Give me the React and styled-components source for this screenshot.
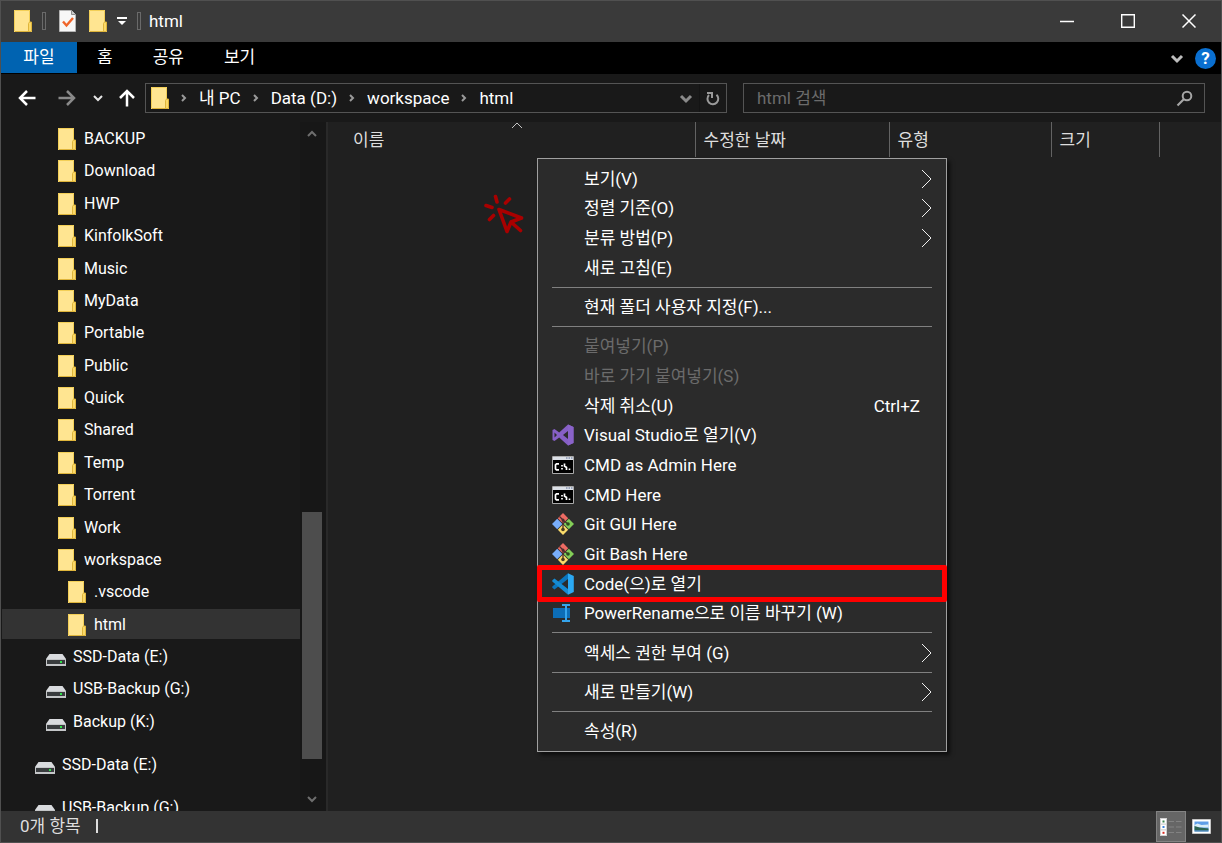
import React from "react";
import styled, { createGlobalStyle, css } from "styled-components";

const GlobalStyle = createGlobalStyle`
  *, *::before, *::after { box-sizing: border-box; }
  body {
    margin: 0;
    background: #202020;
    color: #fff;
    font-family: Roboto, "Noto Sans CJK KR", sans-serif;
    font-size: 17px;
    line-height: 24px;
  }
  button, input, a { font: inherit; color: inherit; }
  button { border: 0; padding: 0; background: none; }
  svg { display: block; flex: none; }
`;

const Window = styled.div`
  display: flex;
  flex-direction: column;
  height: 100vh;
  border: 1px solid #505050;
  overflow: hidden;
`;

const TitleBar = styled.header`
  display: flex;
  align-items: center;
  height: 41px;
  flex: none;
  padding: 0 2px 2px 13px;
  background: #3a3a3a;
`;

const QuickBar = styled.div`
  display: flex;
  align-items: center;
  gap: 10px;
`;

const QuickButton = styled.button`
  display: flex;
  padding: 0 ${(p) => (p.$wide ? "3px" : "0")};
`;

const Grip = styled.span`
  width: 4px;
  height: 18px;
  border: 1px solid #6a6a6a;
`;

const Title = styled.h1`
  margin: 0 auto 0 8px;
  font-size: 17px;
  font-weight: 400;
`;

const CaptionButton = styled.button`
  display: flex;
  align-items: center;
  justify-content: center;
  width: 61px;
  height: 39px;
`;

const RibbonTabs = styled.nav`
  display: flex;
  align-items: center;
  height: 32px;
  flex: none;
  padding-right: 5px;
  background: #000;
`;

const Tab = styled.button`
  height: 31px;
  align-self: flex-start;
  padding: 0 20px 2px;
  ${(p) =>
    p.$file &&
    css`
      width: 76px;
      background: #0063b1;
    `}
`;

const RibbonTools = styled.div`
  display: flex;
  align-items: center;
  gap: 10px;
  margin-left: auto;
`;

const HelpButton = styled.button`
  width: 21px;
  height: 21px;
  border-radius: 50%;
  background: #0a6fd0;
  font-size: 17px;
  font-weight: 700;
  line-height: 21px;
`;

const AddressRow = styled.div`
  display: flex;
  align-items: center;
  height: 48px;
  flex: none;
  padding: 0 16px 0 2px;
  background: #191919;
`;

const NavButtons = styled.div`
  display: flex;
  align-items: center;
  margin-right: 4px;
`;

const NavButton = styled.button`
  display: flex;
  justify-content: center;
  width: ${(p) => p.$width};
`;

const AddressBar = styled.div`
  display: flex;
  align-items: center;
  flex: 1;
  height: 30px;
  padding-left: 5px;
  border: 1px solid #545454;
`;

const Crumbs = styled.ol`
  display: flex;
  align-items: center;
  margin: 0 auto 0 0;
  padding: 0;
  list-style: none;
`;

const Crumb = styled.li`
  display: flex;
  align-items: center;
  gap: 12px;
  margin-left: 11px;

  a { text-decoration: none; white-space: nowrap; }
`;

const AddressButton = styled.button`
  display: flex;
  align-items: center;
  height: 28px;
  padding: 0 5px;
  border-left: ${(p) => (p.$divided ? "1px solid #141414" : "0")};
`;

const SearchBox = styled.label`
  display: flex;
  align-items: center;
  width: 462px;
  height: 30px;
  margin-left: 16px;
  padding: 0 11px 0 13px;
  border: 1px solid #545454;
`;

const SearchInput = styled.input`
  flex: 1;
  min-width: 0;
  padding: 0;
  border: 0;
  outline: 0;
  background: none;
  &::placeholder { color: #6b6b6b; opacity: 1; }
`;

const Body = styled.div`
  display: flex;
  flex: 1;
  min-height: 0;
`;

const Sidebar = styled.aside`
  display: flex;
  width: 327px;
  flex: none;
  overflow: hidden;
  background: #191919;
  border-right: 2px solid #292929;
  font-size: 16px;
`;

const Tree = styled.div`
  flex: 1;
  padding: 1px 0 0 1px;
  overflow: hidden;
`;

const TreeGroup = styled.ul`
  display: flex;
  flex-direction: column;
  justify-content: space-between;
  height: ${(p) => p.$height};
  margin: 0 0 13px;
  padding: 0;
  list-style: none;
`;

const TreeItem = styled.button`
  display: flex;
  align-items: center;
  gap: ${(p) => (p.$drive ? "7px" : "8px")};
  width: 100%;
  height: 30px;
  padding-top: 2px;
  padding-left: ${(p) => p.$indent};
  background: ${(p) => (p.$selected ? "#333" : "none")};
  white-space: nowrap;

  svg { margin-top: ${(p) => (p.$drive ? "6px" : "0")}; }
`;

const ScrollTrack = styled.div`
  display: flex;
  flex-direction: column;
  align-items: center;
  width: 26px;
  padding: 8px 3px 8px 1px;
  background: #171717;
`;

const ScrollThumb = styled.div`
  width: 20px;
  height: 247px;
  margin: auto 0 36px;
  background: #4d4d4d;
`;

const FilePane = styled.main`
  position: relative;
  flex: 1;
  min-width: 0;
  background: #202020;
`;

const FileTable = styled.table`
  width: 100%;
  table-layout: fixed;
  border-collapse: collapse;
`;

const HeadCell = styled.th`
  position: relative;
  width: ${(p) => p.$width};
  height: 35px;
  padding: 0 0 0 ${(p) => (p.$first ? "25px" : "8px")};
  border-right: ${(p) => (p.$width ? "1px solid #636363" : "0")};
  color: #dedede;
  font-weight: 400;
  text-align: left;
`;

const SortMark = styled.span`
  position: absolute;
  top: 0;
  left: 50%;
`;

const ClickMark = styled.div`
  position: absolute;
  top: 72px;
  left: 156px;
`;

const ContextMenu = styled.ul`
  position: absolute;
  top: 36px;
  left: 209px;
  display: flex;
  flex-direction: column;
  justify-content: space-between;
  width: 410px;
  height: 594px;
  margin: 0;
  padding: 5px 0;
  border: 1px solid #a0a0a0;
  background: #2b2b2b;
  box-shadow: 3px 3px 4px rgba(0, 0, 0, 0.6);
  list-style: none;
`;

const MenuButton = styled.button`
  display: grid;
  grid-template-columns: 22px 1fr auto;
  column-gap: 10px;
  align-items: center;
  width: 100%;
  height: 29px;
  padding: 0 14px;
  text-align: left;
  color: ${(p) => (p.disabled ? "#6b6b6b" : "#fff")};
`;

const MenuLabel = styled.span`
  white-space: nowrap;
`;

const Shortcut = styled.span`
  padding-right: 12px;
`;

const MenuLine = styled.li`
  height: 1px;
  margin: 4px 14px;
  background: #808080;
`;

const MenuItem = styled.li`
  position: relative;
`;

const RedFrame = styled.span`
  position: absolute;
  inset: -4px -1px;
  border: 5px solid #fe0000;
  border-radius: 2px;
  pointer-events: none;
`;

const StatusBar = styled.footer`
  display: flex;
  align-items: center;
  height: 31px;
  flex: none;
  padding: 0 5px 0 19px;
  background: #333;
  color: #dedede;
`;

const StatusText = styled.span`
  margin-bottom: 2px;
  padding-right: 15px;
  border-right: 2px solid #dedede;
  line-height: 14px;
`;

const ViewButton = styled.button`
  display: flex;
  align-items: center;
  justify-content: center;
  width: 30px;
  height: 31px;
  border: 1px solid ${(p) => (p.$active ? "#838383" : "transparent")};
  background: ${(p) => (p.$active ? "#666" : "none")};

  &:first-of-type { margin-left: auto; }
`;

const FolderIcon = () => (
  <svg width="18" height="22" viewBox="0 0 18 22">
    <path d="M0 0h16v12l2 1v9H0z" fill="#ffe591" />
    <path d="M.5 21.5V.5h15v12" fill="none" stroke="#f3cf57" />
    <path d="M14.5 21v-7.5l1-1.500h2v9.500H1" fill="#fbd968" stroke="#dfb53b" />
  </svg>
);

const DriveIcon = () => (
  <svg width="20" height="12" viewBox="0 0 20 12">
    <path d="M3.500 0h13L20 5H0z" fill="#d9dbde" />
    <path d="M0 5h20v7H0z" fill="#c4c6c8" />
    <path d="M1 6h18v4H1z" fill="#393c3e" />
    <path d="M14 7h2v2h-2z" fill="#2fe04a" />
  </svg>
);

const PropertiesIcon = () => (
  <svg width="17" height="22" viewBox="0 0 17 22">
    <path d="M.5.5h12l4 4v17H.5z" fill="#f7f7f7" stroke="#b5b5b5" />
    <path d="M12.500.5v4h4" fill="#ccc" stroke="#8d8d8d" />
    <path d="M4 11.500l3.500 4L14 8" fill="none" stroke="#f0652a" strokeWidth="2.400" />
  </svg>
);

/* size is the depth of the point; the opening is twice as wide */
const Chevron = ({ dir = "right", size = 3, color = "#9a9a9a", weight = 2 }) => {
  const near = weight;
  const mid = near + size;
  const far = near + size * 2;
  const long = far + near;
  const short = mid + near;
  const upright = dir === "right";
  const points = {
    right: `${near},${near} ${mid},${mid} ${near},${far}`,
    down: `${near},${near} ${mid},${mid} ${far},${near}`,
    up: `${near},${mid} ${mid},${near} ${far},${mid}`,
  }[dir];
  return (
    <svg width={upright ? short : long} height={upright ? long : short}>
      <polyline points={points} fill="none" stroke={color} strokeWidth={weight} />
    </svg>
  );
};

const Arrow = ({ turn = 0, color = "#fff" }) => (
  <svg width="18" height="18" viewBox="0 0 18 18">
    <path
      d="M17.500 9H2M9 2L2 9l7 7"
      transform={`rotate(${turn} 9 9)`}
      fill="none"
      stroke={color}
      strokeWidth="2.500"
    />
  </svg>
);

const VisualStudioIcon = () => (
  <svg width="22" height="22" viewBox="0 0 22 22">
    <path
      fillRule="evenodd"
      d="M16 .5L21.500 3v16L16 21.500 7.200 13.500l-4.700 3.500L.5 16V6l2-1 4.700 3.500zM16 7l-5 4 5 4zM2.500 8.500v5L5 11z"
      fill="#865fc5"
    />
    <path d="M16 .5L21.500 3v16L16 21.500z" fill="#8a63c9" />
  </svg>
);

const ConsoleIcon = () => (
  <svg width="22" height="18" viewBox="0 0 22 18">
    <path d="M.5.5h21v17H.5z" fill="#000" stroke="#aaa" />
    <path d="M1 1h20v3H1z" fill="#dce1e8" />
    <path d="M14 1.500h1.500v1H14zM16.500 1.500H18v1h-1.500zM19 1.500h1.500v1H19z" fill="#5a6d91" />
    <path
      d="M7 7.800H4.500l-1 1v4l1 1H7M10 9v1.500M10 12v1.500M12.500 7.500v2.500l2 1.500v2.500M17.500 12.500v1.500"
      fill="none"
      stroke="#fff"
      strokeWidth="1.700"
    />
  </svg>
);

const GitIcon = () => (
  <svg width="22" height="22" viewBox="0 0 22 22">
    <path d="M11 0l5.200 5.200L11 10.400 5.800 5.200z" fill="#ed6b63" />
    <path d="M5.200 5.800L10.400 11l-5.200 5.200L0 11z" fill="#79aefa" />
    <path d="M16.800 5.800L22 11l-5.200 5.200L11.600 11z" fill="#83ce57" />
    <path d="M11 11.600l5.200 5.200L11 22l-5.200-5.200z" fill="#fbdc6b" />
    <path d="M7.500 3.500L11 7v9M11 7l5 4" fill="none" stroke="#4a2c2c" strokeWidth="1.300" />
    <circle cx="11" cy="7" r="1.500" fill="#4a2c2c" />
    <circle cx="11" cy="16.500" r="1.800" fill="#4a3c20" />
    <circle cx="16" cy="11" r="1.800" fill="#2c4a20" />
  </svg>
);

const CodeIcon = () => (
  <svg width="22" height="22" viewBox="0 0 22 22">
    <path d="M16 6L2.500 16.500.3 14.800V13.500L16 .3z" fill="#0b75bd" />
    <path d="M16 16L2.500 5.500.3 7.200v1.300L16 21.700z" fill="#158bd3" />
    <path d="M16 .2L21.800 3v16L16 21.800z" fill="#2ba9f3" />
  </svg>
);

const RenameIcon = () => (
  <svg width="20" height="18" viewBox="0 0 20 18">
    <path d="M1 4h17v10H1z" fill="#0c6db6" />
    <path d="M10 0h8v2h-3v14h3v2h-8v-2h3V2h-3z" fill="#35a4ec" />
  </svg>
);

const RefreshIcon = () => (
  <svg width="16" height="17" viewBox="0 0 16 17">
    <path d="M4 5a5.400 5.400 0 1 0 7.500-.2" fill="none" stroke="#9a9a9a" strokeWidth="2" />
    <path d="M2 3h5v5" fill="none" stroke="#9a9a9a" strokeWidth="2" />
  </svg>
);

const SearchIcon = () => (
  <svg width="17" height="17" viewBox="0 0 17 17">
    <circle cx="11" cy="6" r="4.300" fill="none" stroke="#a6a6a6" strokeWidth="2" />
    <path d="M8 9l-6.500 6.500" stroke="#a6a6a6" strokeWidth="2.200" />
  </svg>
);

const ClickIcon = () => (
  <svg width="40" height="40" viewBox="0 0 40 40">
    <g fill="none" stroke="#a90000" strokeWidth="3.600" strokeLinecap="round" strokeLinejoin="round">
      <path d="M15 15.500l22.500 8.500-10.500 4-4 9.500zM27 28l9.500 8.500" />
      <path d="M11.500 2.500L13 8M2 11.500l6 2M25.500 5l-4 4M5.500 25.500l4-4" />
    </g>
  </svg>
);

const ListViewIcon = () => (
  <svg width="22" height="18" viewBox="0 0 22 18">
    <path d="M0 0h7v18H0z" fill="#d0d0d0" />
    <path d="M1 1h5v4.500H1zM1 6.800h5v4.500H1zM1 12.500h5V17H1z" fill="#fff" />
    <path d="M2.500 2.500h2v2h-2z" fill="#39844f" />
    <path d="M2.500 8h2v2h-2z" fill="#3b82dc" />
    <path d="M2.500 13.800h2v2h-2z" fill="#d82a20" />
    <path d="M8.500 3.500H14M16 3.500h5.500M8.500 9H14M16 9h5.500M8.500 14.500H14M16 14.500h5.500" stroke="#828282" />
  </svg>
);

const PictureViewIcon = () => (
  <svg width="19" height="15" viewBox="0 0 19 15">
    <path d="M.5.5h18v14H.5z" fill="#fff" stroke="#c4c4c4" />
    <path d="M2.500 2.500h14v10h-14z" fill="#5f9ee8" />
    <path d="M2.500 6l3-1.500 4 1.500 7-.5v3h-14z" fill="#d9ecf7" />
    <path d="M2.500 7l5 1.500 9 1v1.500h-14z" fill="#2c6452" />
    <path d="M2.500 11h14v1.500h-14z" fill="#4a83a8" />
  </svg>
);

const folders = [
  "BACKUP", "Download", "HWP", "KinfolkSoft", "Music", "MyData", "Portable",
  "Public", "Quick", "Shared", "Temp", "Torrent", "Work", "workspace",
];
const treeItems = [
  ...folders.map((name) => ({ name, indent: "56px" })),
  { name: ".vscode", indent: "66px" },
  { name: "html", indent: "66px", selected: true },
  { name: "SSD-Data (E:)", indent: "44px", drive: true },
  { name: "USB-Backup (G:)", indent: "44px", drive: true },
  { name: "Backup (K:)", indent: "44px", drive: true },
];

const crumbs = ["내 PC", "Data (D:)", "workspace", "html"];

const columns = [
  { label: "이름", width: "367px", sorted: true },
  { label: "수정한 날짜", width: "194px" },
  { label: "유형", width: "162px" },
  { label: "크기", width: "108px" },
];

const line = { line: true };
const menuItems = [
  { label: "보기(V)", more: true },
  { label: "정렬 기준(O)", more: true },
  { label: "분류 방법(P)", more: true },
  { label: "새로 고침(E)" },
  line,
  { label: "현재 폴더 사용자 지정(F)..." },
  line,
  { label: "붙여넣기(P)", disabled: true },
  { label: "바로 가기 붙여넣기(S)", disabled: true },
  { label: "삭제 취소(U)", shortcut: "Ctrl+Z" },
  { label: "Visual Studio로 열기(V)", icon: <VisualStudioIcon /> },
  { label: "CMD as Admin Here", icon: <ConsoleIcon /> },
  { label: "CMD Here", icon: <ConsoleIcon /> },
  { label: "Git GUI Here", icon: <GitIcon /> },
  { label: "Git Bash Here", icon: <GitIcon /> },
  { label: "Code(으)로 열기", icon: <CodeIcon />, framed: true },
  { label: "PowerRename으로 이름 바꾸기 (W)", icon: <RenameIcon /> },
  line,
  { label: "액세스 권한 부여 (G)", more: true },
  line,
  { label: "새로 만들기(W)", more: true },
  line,
  { label: "속성(R)" },
];

const TreeRow = ({ name, indent, drive, selected }) => (
  <li>
    <TreeItem $indent={indent} $drive={drive} $selected={selected}>
      {drive ? <DriveIcon /> : <FolderIcon />}
      {name}
    </TreeItem>
  </li>
);

export default function App() {
  return (
    <>
      <GlobalStyle />
      <Window>
        <TitleBar>
          <QuickBar>
            <FolderIcon />
            <Grip />
            <QuickButton $wide aria-label="속성"><PropertiesIcon /></QuickButton>
            <QuickButton aria-label="새 폴더"><FolderIcon /></QuickButton>
            <QuickButton aria-label="빠른 실행 도구 모음 사용자 지정">
              <svg width="10" height="10" viewBox="0 0 10 10">
                <path d="M0 1h10v2H0zM1 5h8L5 9z" fill="#fff" />
              </svg>
            </QuickButton>
            <Grip />
          </QuickBar>
          <Title>html</Title>
          <CaptionButton aria-label="최소화">
            <svg width="14" height="14" viewBox="0 0 14 14">
              <path d="M0 7.500h14" stroke="#fff" strokeWidth="1.500" />
            </svg>
          </CaptionButton>
          <CaptionButton aria-label="최대화">
            <svg width="14" height="14" viewBox="0 0 14 14">
              <path d="M.7.7h12.600v12.600H.7z" fill="none" stroke="#fff" strokeWidth="1.400" />
            </svg>
          </CaptionButton>
          <CaptionButton aria-label="닫기">
            <svg width="14" height="14" viewBox="0 0 14 14">
              <path d="M.5.5l13 13M13.500.5l-13 13" stroke="#fff" strokeWidth="1.500" />
            </svg>
          </CaptionButton>
        </TitleBar>

        <RibbonTabs>
          <Tab $file>파일</Tab>
          <Tab>홈</Tab>
          <Tab>공유</Tab>
          <Tab>보기</Tab>
          <RibbonTools>
            <QuickButton aria-label="리본 확장">
              <Chevron dir="down" size={5} color="#bdbdbd" weight={3} />
            </QuickButton>
            <HelpButton aria-label="도움말">?</HelpButton>
          </RibbonTools>
        </RibbonTabs>

        <AddressRow>
          <NavButtons>
            <NavButton $width="48px" aria-label="뒤로"><Arrow /></NavButton>
            <NavButton $width="32px" aria-label="앞으로"><Arrow turn={180} color="#8a8a8a" /></NavButton>
            <NavButton $width="30px" aria-label="최근 위치">
              <Chevron dir="down" size={4} color="#e6e6e6" />
            </NavButton>
            <NavButton $width="28px" aria-label="위로"><Arrow turn={90} /></NavButton>
          </NavButtons>
          <AddressBar>
            <FolderIcon />
            <Crumbs>
              {crumbs.map((name) => (
                <Crumb key={name}>
                  <Chevron />
                  <a href="#path">{name}</a>
                </Crumb>
              ))}
            </Crumbs>
            <AddressButton aria-label="이전 위치">
              <Chevron dir="down" size={5} weight={3} color="#8a8a8a" />
            </AddressButton>
            <AddressButton $divided aria-label="새로 고침"><RefreshIcon /></AddressButton>
          </AddressBar>
          <SearchBox>
            <SearchInput type="text" placeholder="html 검색" aria-label="html 검색" />
            <SearchIcon />
          </SearchBox>
        </AddressRow>

        <Body>
          <Sidebar>
            <Tree>
              <TreeGroup $height="613px">
                {treeItems.map((item) => (
                  <TreeRow key={item.name} {...item} />
                ))}
              </TreeGroup>
              <TreeGroup $height="30px">
                <TreeRow name="SSD-Data (E:)" indent="33px" drive />
              </TreeGroup>
              <TreeGroup $height="30px">
                <TreeRow name="USB-Backup (G:)" indent="33px" drive />
              </TreeGroup>
            </Tree>
            <ScrollTrack>
              <Chevron dir="up" size={4} color="#6e6e6e" />
              <ScrollThumb />
              <Chevron dir="down" size={4} color="#6e6e6e" />
            </ScrollTrack>
          </Sidebar>

          <FilePane>
            <FileTable>
              <thead>
                <tr>
                  {columns.map(({ label, width, sorted }) => (
                    <HeadCell key={label} $width={width} $first={sorted} scope="col">
                      {label}
                      {sorted && (
                        <SortMark>
                          <Chevron dir="up" size={5} weight={1} color="#c4c4c4" />
                        </SortMark>
                      )}
                    </HeadCell>
                  ))}
                  <HeadCell as="td" />
                </tr>
              </thead>
            </FileTable>

            <ClickMark><ClickIcon /></ClickMark>

            <ContextMenu>
              {menuItems.map((item, i) =>
                item.line ? (
                  <MenuLine key={i} role="separator" />
                ) : (
                  <MenuItem key={i}>
                    <MenuButton disabled={item.disabled}>
                      <span>{item.icon}</span>
                      <MenuLabel>{item.label}</MenuLabel>
                      {item.shortcut && <Shortcut>{item.shortcut}</Shortcut>}
                      {item.more && <Chevron size={9} weight={1} color="#f0f0f0" />}
                    </MenuButton>
                    {item.framed && <RedFrame />}
                  </MenuItem>
                )
              )}
            </ContextMenu>
          </FilePane>
        </Body>

        <StatusBar>
          <StatusText>0개 항목</StatusText>
          <ViewButton $active aria-label="자세히"><ListViewIcon /></ViewButton>
          <ViewButton aria-label="큰 아이콘"><PictureViewIcon /></ViewButton>
        </StatusBar>
      </Window>
    </>
  );
}
